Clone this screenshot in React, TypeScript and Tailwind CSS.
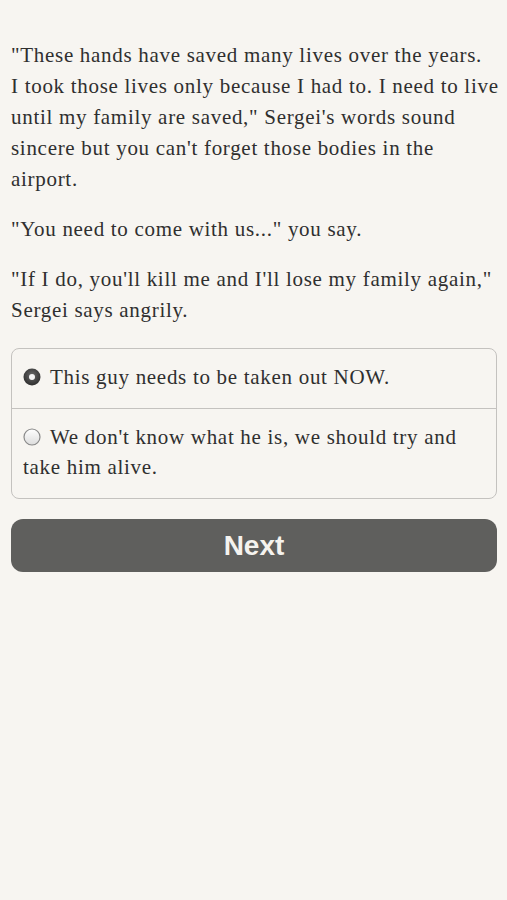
const serif = { fontFamily: '"Liberation Serif", "Times New Roman", serif' };

function Radio({ checked }: { checked: boolean }) {
  return (
    <svg width="18" height="18" viewBox="0 0 18 18" className="inline-block shrink-0 align-[-2px] mr-[9px]">
      <defs>
        <radialGradient id="rOn" cx="50%" cy="40%" r="60%">
          <stop offset="0%" stopColor="#6a6a6a" />
          <stop offset="100%" stopColor="#2e2e2e" />
        </radialGradient>
        <linearGradient id="rOff" x1="0" y1="0" x2="0" y2="1">
          <stop offset="0%" stopColor="#ffffff" />
          <stop offset="100%" stopColor="#dcdcdc" />
        </linearGradient>
      </defs>
      {checked ? (
        <>
          <circle cx="9" cy="9" r="8.5" fill="url(#rOn)" />
          <circle cx="9" cy="9" r="3" fill="#f4f4f4" />
        </>
      ) : (
        <circle cx="9" cy="9" r="8" fill="url(#rOff)" stroke="#8a8a8a" strokeWidth="1.2" />
      )}
    </svg>
  );
}

const choices = [
  { text: "This guy needs to be taken out NOW.", checked: true },
  { text: "We don't know what he is, we should try and take him alive.", checked: false },
];

export default function App() {
  return (
    <div className="min-h-[900px] bg-[#f7f5f1] text-[#2f2f2f]">
      <div className="pl-[11px] pr-[10px] pt-[40px]" style={serif}>
        <div className="w-[492px] text-[21px] leading-[31px] tracking-[0.7px]">
          <p>
            "These hands have saved many lives over the years.
            <br />I took those lives only because I had to. I need to live until my family are saved," Sergei's words
            sound sincere but you can't forget those bodies in the airport.
          </p>
          <p className="mt-[19px]">"You need to come with us..." you say.</p>
          <p className="mt-[19px]">"If I do, you'll kill me and I'll lose my family again," Sergei says angrily.</p>
        </div>

        <div className="mt-[22px] rounded-[8px] border border-[#c4c2bf] bg-[#f7f5f1] text-[21px] leading-[30px] tracking-[0.7px]">
          {choices.map((c, i) => (
            <div
              key={i}
              className={`pl-[11px] pr-[10px] pt-[13px] pb-[16px] ${i > 0 ? "border-t border-[#c4c2bf]" : ""}`}
            >
              <Radio checked={c.checked} />
              {c.text}
            </div>
          ))}
        </div>

        <button
          className="mt-[20px] h-[53px] w-full rounded-[12px] bg-[#5f5f5d] text-[28px] font-bold text-[#f5f3ef]"
          style={{ fontFamily: '"Liberation Sans", Arial, sans-serif' }}
        >
          Next
        </button>
      </div>
    </div>
  );
}
